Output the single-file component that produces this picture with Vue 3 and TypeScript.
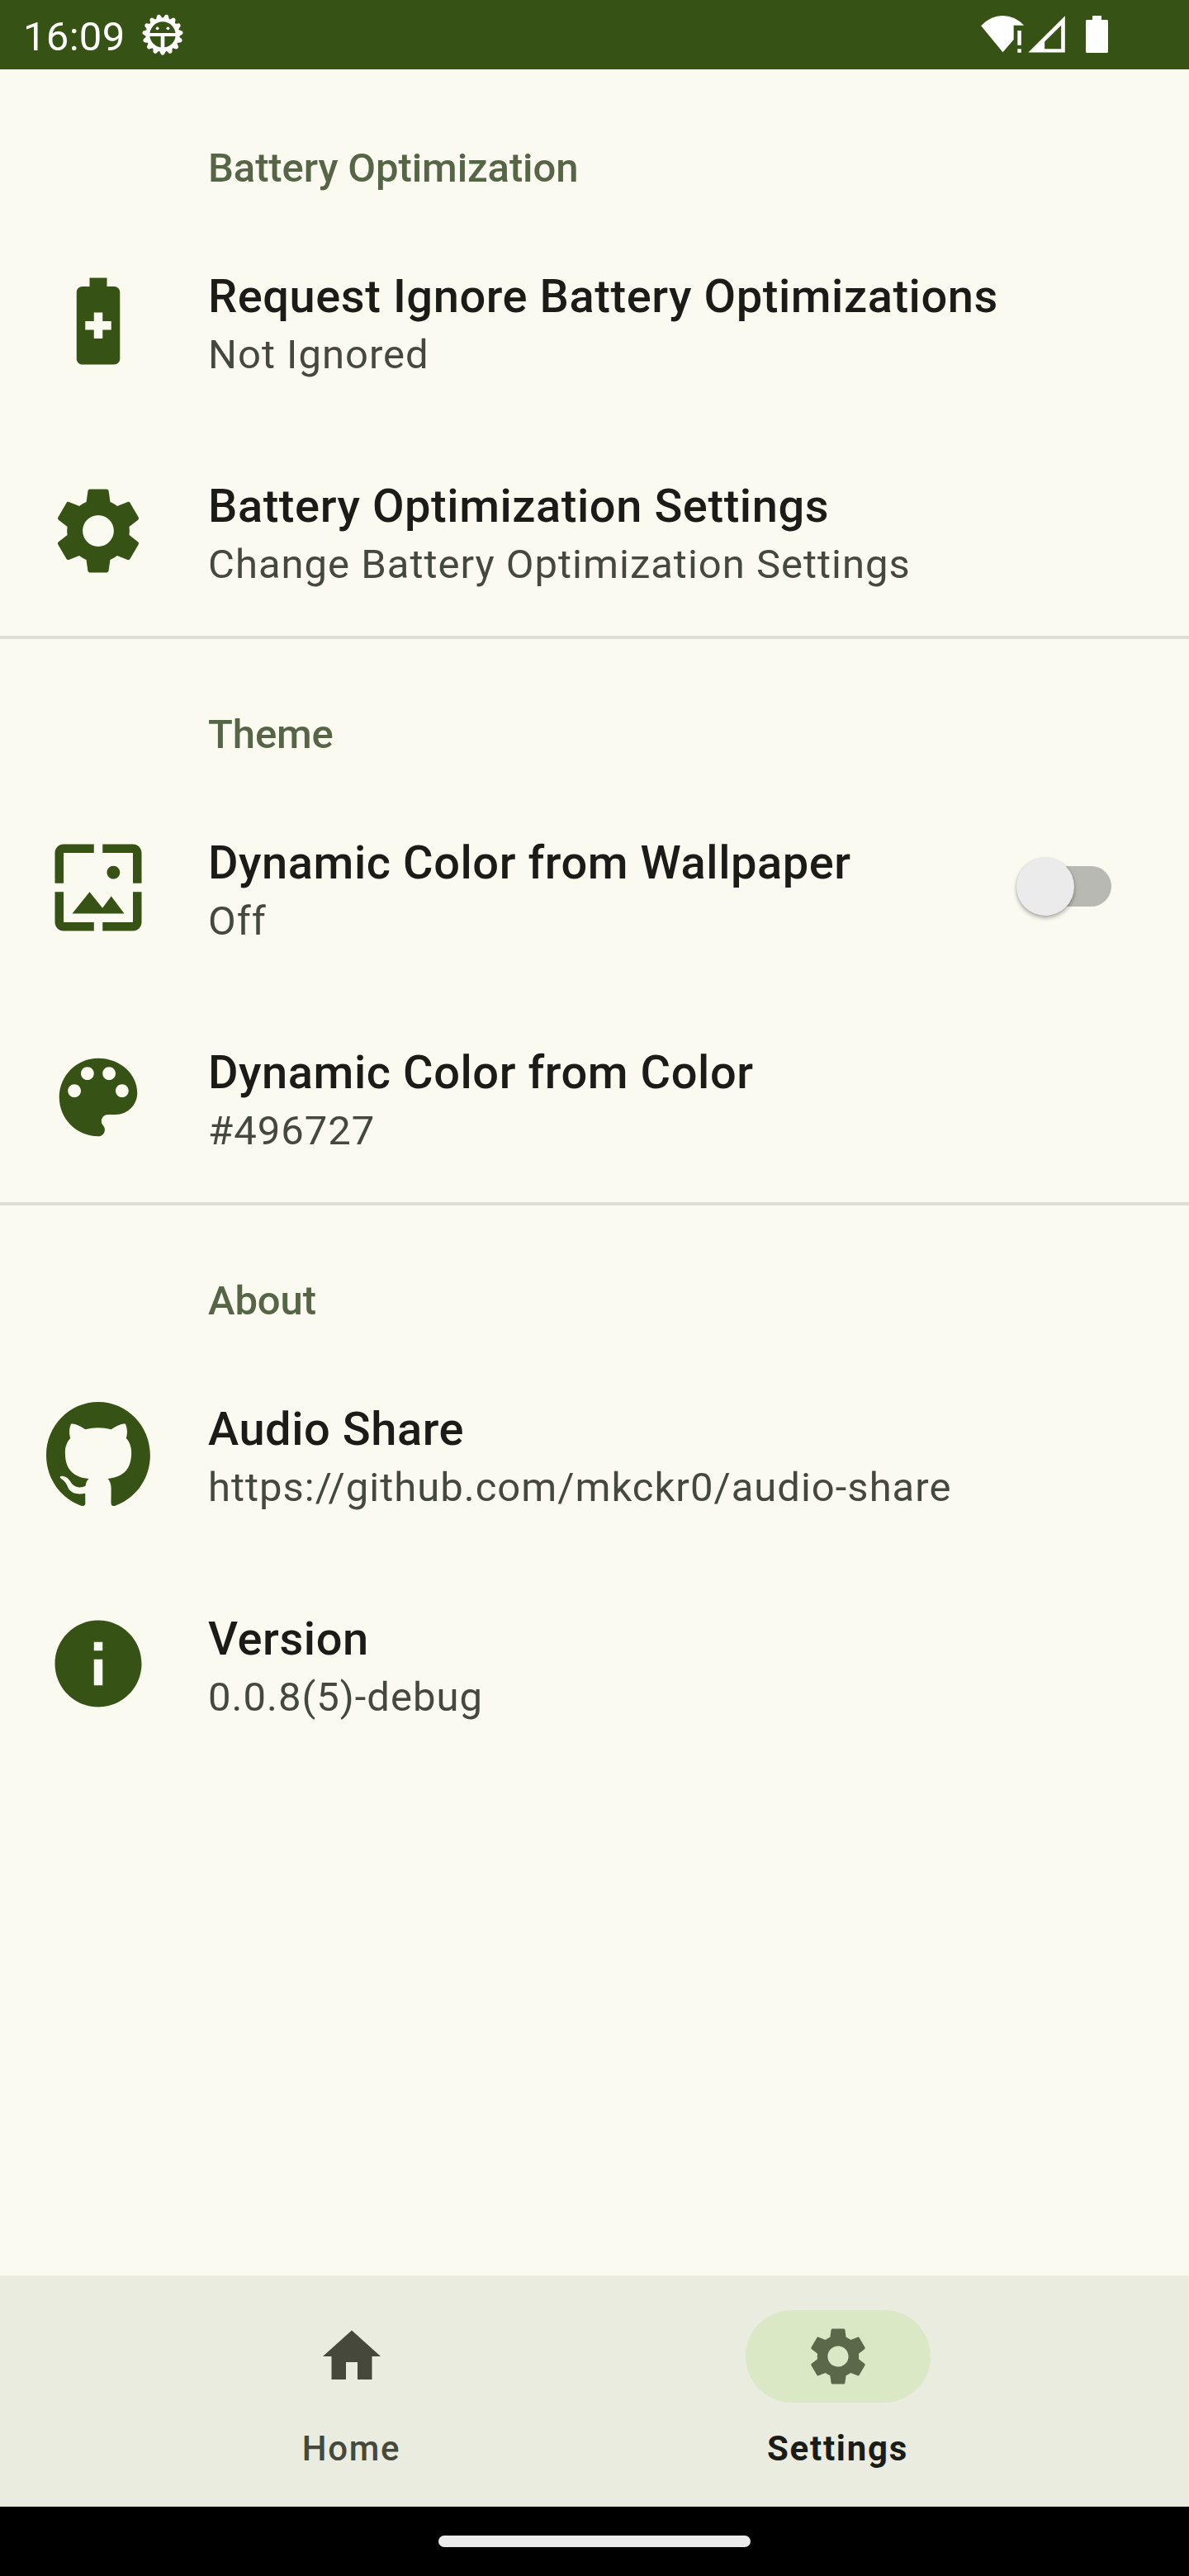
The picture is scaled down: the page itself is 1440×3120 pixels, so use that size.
<script setup lang="ts">
import { ref } from 'vue'

interface Preference {
  title: string
  summary: string
  viewBox: string
  path: string
  toggle?: boolean
}

interface Category {
  name: string
  items: Preference[]
}

const GEAR =
  'M19.14 12.94c.04-.3.06-.61.06-.94 0-.32-.02-.64-.07-.94l2.03-1.58c.18-.14.23-.41.12-.61l-1.92-3.32c-.12-.22-.37-.29-.59-.22l-2.39.96c-.5-.38-1.03-.7-1.62-.94l-.36-2.54c-.04-.24-.24-.41-.48-.41h-3.84c-.24 0-.43.17-.47.41l-.36 2.54c-.59.24-1.13.57-1.62.94l-2.39-.96c-.22-.08-.47 0-.59.22L2.74 8.87c-.12.21-.08.47.12.61l2.03 1.58c-.05.3-.09.63-.09.94s.02.64.07.94l-2.03 1.58c-.18.14-.23.41-.12.61l1.92 3.32c.12.22.37.29.59.22l2.39-.96c.5.38 1.03.7 1.62.94l.36 2.54c.05.24.24.41.48.41h3.84c.24 0 .44-.17.47-.41l.36-2.54c.59-.24 1.13-.56 1.62-.94l2.39.96c.22.08.47 0 .59-.22l1.92-3.32c.12-.22.07-.47-.12-.61l-2.01-1.58zM12 15.6c-1.98 0-3.6-1.62-3.6-3.6s1.62-3.6 3.6-3.6 3.6 1.62 3.6 3.6-1.62 3.6-3.6 3.6z'
const HOME = 'M10 20v-6h4v6h5v-8h3L12 3 2 12h3v8z'
const BATTERY_PLUS =
  'M15.67 4H14V2h-4v2H8.33C7.6 4 7 4.6 7 5.33v15.33C7 21.4 7.6 22 8.33 22h7.33c.74 0 1.34-.6 1.34-1.33V5.33C17 4.6 16.4 4 15.67 4zM15 14h-2v2h-2v-2H9v-2h2v-2h2v2h2v2z'
const WALLPAPER =
  'M4 4h7V2H4c-1.1 0-2 .9-2 2v7h2V4zm6 9l-4 5h12l-3-4-2.03 2.71L10 13zm7-4.5c0-.83-.67-1.5-1.5-1.5S14 7.67 14 8.5s.67 1.5 1.5 1.5S17 9.33 17 8.5zM20 2h-7v2h7v7h2V4c0-1.1-.9-2-2-2zm0 18h-7v2h7c1.1 0 2-.9 2-2v-7h-2v7zM4 13H2v7c0 1.1.9 2 2 2h7v-2H4v-7z'
const PALETTE =
  'M12 3c-4.97 0-9 4.03-9 9s4.03 9 9 9c.83 0 1.5-.67 1.5-1.5 0-.39-.15-.74-.39-1.01-.23-.26-.38-.61-.38-.99 0-.83.67-1.5 1.5-1.5H16c2.76 0 5-2.24 5-5 0-4.42-4.03-8-9-8zm-5.5 9c-.83 0-1.5-.67-1.5-1.5S5.67 9 6.5 9 8 9.67 8 10.5 7.33 12 6.5 12zm3-4C8.67 8 8 7.33 8 6.5S8.67 5 9.5 5s1.5.67 1.5 1.5S10.33 8 9.5 8zm5 0c-.83 0-1.5-.67-1.5-1.5S13.67 5 14.5 5s1.5.67 1.5 1.5S15.33 8 14.5 8zm3 4c-.83 0-1.5-.67-1.5-1.5S16.67 9 17.5 9s1.5.67 1.5 1.5-.67 1.5-1.5 1.5z'
const GITHUB =
  'M48.854 0C21.839 0 0 22 0 49.217c0 21.756 13.993 40.172 33.405 46.69 2.427.49 3.316-1.059 3.316-2.362 0-1.141-.08-5.052-.08-9.127-13.59 2.934-16.42-5.867-16.42-5.867-2.184-5.704-5.42-7.17-5.42-7.17-4.448-3.015.324-3.015.324-3.015 4.934.326 7.523 5.052 7.523 5.052 4.367 7.496 11.404 5.378 14.235 4.074.404-3.178 1.699-5.378 3.074-6.6-10.839-1.141-22.243-5.378-22.243-24.283 0-5.378 1.94-9.778 5.014-13.2-.485-1.222-2.184-6.275.486-13.038 0 0 4.125-1.304 13.426 5.052a46.97 46.97 0 0 1 12.214-1.63c4.125 0 8.33.571 12.213 1.63 9.302-6.356 13.427-5.052 13.427-5.052 2.67 6.763.97 11.816.485 13.038 3.155 3.422 5.015 7.822 5.015 13.2 0 18.905-11.404 23.06-22.324 24.283 1.78 1.548 3.316 4.481 3.316 9.126 0 6.6-.08 11.897-.08 13.526 0 1.304.89 2.853 3.316 2.364 19.412-6.52 33.405-24.935 33.405-46.691C97.707 22 75.788 0 48.854 0z'
const INFO = 'M12 2C6.48 2 2 6.48 2 12s4.48 10 10 10 10-4.48 10-10S17.52 2 12 2zm1 15h-2v-6h2v6zm0-8h-2V7h2v2z'

const categories: Category[] = [
  {
    name: 'Battery Optimization',
    items: [
      { title: 'Request Ignore Battery Optimizations', summary: 'Not Ignored', viewBox: '0 0 24 24', path: BATTERY_PLUS },
      { title: 'Battery Optimization Settings', summary: 'Change Battery Optimization Settings', viewBox: '0 0 24 24', path: GEAR },
    ],
  },
  {
    name: 'Theme',
    items: [
      { title: 'Dynamic Color from Wallpaper', summary: 'Off', viewBox: '0 0 24 24', path: WALLPAPER, toggle: true },
      { title: 'Dynamic Color from Color', summary: '#496727', viewBox: '0 0 24 24', path: PALETTE },
    ],
  },
  {
    name: 'About',
    items: [
      { title: 'Audio Share', summary: 'https://github.com/mkckr0/audio-share', viewBox: '0 0 97.71 96', path: GITHUB },
      { title: 'Version', summary: '0.0.8(5)-debug', viewBox: '0 0 24 24', path: INFO },
    ],
  },
]

const tabs = [
  { label: 'Home', path: HOME },
  { label: 'Settings', path: GEAR },
]
const active = ref('Settings')

// Fifteen teeth around the debug badge, one pointing straight down
const teeth = Array.from({ length: 15 }, (_, i) => i * 24)
</script>

<template>
  <div class="screen">
    <header class="status">
      <span class="clock">16:09</span>
      <svg class="badge" viewBox="-25 -25 50 50">
        <path
          v-for="a in teeth"
          :key="a"
          :transform="`rotate(${a})`"
          d="M-4.6 18L-2.4 23Q-1.8 24.7 0 24.7Q1.8 24.7 2.4 23L4.6 18z"
        />
        <path fill-rule="evenodd" d="M0-20.6a20.6 20.6 0 1 0 0 41.2a20.6 20.6 0 1 0 0-41.2zM0-15.7a15.7 15.7 0 1 1 0 31.4a15.7 15.7 0 1 1 0-31.4z" />
        <path d="M-17-1.9h34v3.8H2.3V17h-4.6V1.9H-17z" />
        <circle cx="-6.4" cy="-7.7" r="1.9" />
        <circle cx="6.4" cy="-7.7" r="1.9" />
      </svg>
      <div class="indicators">
        <svg class="wifi" viewBox="84 51 159 144">
          <path d="M84.5 94Q118 57 163 57Q207 57 240.500 92H203V144L163.500 190z" />
          <path d="M217 111h13.500v53.500H217zM217 178h13.500v13H217z" />
        </svg>
        <svg class="signal" viewBox="252 51 141 144">
          <path fill-rule="evenodd" d="M389.500 58V190.500H256zM375.500 92L315.500 151.500V178H375.500z" />
        </svg>
        <svg class="battery" viewBox="462 51 87 144">
          <path d="M489 57h33v15h21l3 3v114l-3 3h-75l-3-3V75l3-3h21z" />
        </svg>
      </div>
    </header>

    <main class="content">
      <section v-for="(cat, i) in categories" :key="cat.name">
        <h2 class="category" :class="{ divided: i > 0 }">{{ cat.name }}</h2>
        <div v-for="item in cat.items" :key="item.title" class="item">
          <svg class="icon" :viewBox="item.viewBox" preserveAspectRatio="none">
            <path :d="item.path" />
          </svg>
          <div class="text">
            <div class="title">{{ item.title }}</div>
            <div class="summary">{{ item.summary }}</div>
          </div>
          <div v-if="item.toggle" class="switch"><span class="thumb"></span></div>
        </div>
      </section>
    </main>

    <nav class="tabs">
      <div v-for="tab in tabs" :key="tab.label" class="tab" :class="{ active: tab.label === active }">
        <div class="pill">
          <svg viewBox="0 0 24 24"><path :d="tab.path" /></svg>
        </div>
        <span class="label">{{ tab.label }}</span>
      </div>
    </nav>
    <footer class="gesture"><span class="handle"></span></footer>
  </div>
</template>

<style>
body {
  margin: 0;
}
</style>

<style scoped>
.screen {
  width: 1440px;
  height: 3120px;
  display: flex;
  flex-direction: column;
  overflow: hidden;
  background: #fbfaf1;
  font-family: Roboto, sans-serif;
  white-space: nowrap;
}
svg {
  display: block;
  flex: none;
  fill: currentColor;
}
.status {
  box-sizing: border-box;
  height: 84px;
  flex: none;
  display: flex;
  align-items: center;
  padding: 0 97px 0 28px;
  background: #365215;
  color: #fff;
}
.clock {
  width: 144px;
  font-size: 49px;
  line-height: 58px;
  letter-spacing: 0.3px;
  padding-top: 6px;
}
.badge {
  width: 50px;
  height: 50px;
}
.indicators {
  display: flex;
  margin-left: auto;
  height: 50px;
}
.wifi {
  width: 53px;
  height: 48px;
}
.signal {
  width: 47px;
  height: 48px;
  margin-left: 3px;
}
.battery {
  width: 29px;
  height: 48px;
  margin-left: 23px;
}
.content {
  flex: 1;
}
.category {
  box-sizing: border-box;
  height: 178px;
  margin: 0;
  padding: 87px 0 0 252px;
  border-top: 4px solid transparent;
  font-size: 49px;
  line-height: 58px;
  font-weight: 500;
  letter-spacing: -0.1px;
  color: #556546;
}
.category.divided {
  border-top-color: #dddfd5;
}
.item {
  height: 254px;
  display: flex;
  align-items: center;
  padding: 0 94px 0 56px;
}
.icon {
  width: 126px;
  height: 126px;
  color: #365215;
}
.text {
  flex: 1;
  margin-left: 70px;
  padding-top: 6px;
}
.title {
  font-size: 56px;
  line-height: 76px;
  font-weight: 500;
  letter-spacing: 0.56px;
  color: #1b1c17;
}
.summary {
  font-size: 49px;
  line-height: 66px;
  letter-spacing: 1px;
  color: #45483d;
}
.switch {
  width: 115px;
  height: 70px;
  margin-top: -2px;
  display: flex;
  align-items: center;
}
.switch::after {
  content: '';
  width: 80px;
  height: 49px;
  flex: none;
  margin: 0 0 1px -35px;
  border-radius: 0 25px 25px 0;
  background: #b8b9b2;
}
.thumb {
  width: 70px;
  height: 70px;
  flex: none;
  border-radius: 50%;
  background: #ebebeb;
  box-shadow: 0 3px 5px rgba(0, 0, 0, 0.3), 0 0 3px rgba(0, 0, 0, 0.1);
  z-index: 1;
}
.tabs {
  height: 280px;
  flex: none;
  display: flex;
  justify-content: center;
  background: #eaecdf;
}
.tab {
  width: 589px;
  display: flex;
  flex-direction: column;
  align-items: center;
  padding-top: 42px;
  color: #45483b;
}
.pill {
  width: 224px;
  height: 112px;
  border-radius: 56px;
  display: flex;
  align-items: center;
  justify-content: center;
}
.pill svg {
  width: 84px;
  height: 84px;
}
.active .pill {
  background: #dbe8c5;
  color: #5c6949;
}
.label {
  margin-top: 31px;
  font-size: 42px;
  line-height: 50px;
  font-weight: 500;
  letter-spacing: 1.75px;
}
.active .label {
  font-weight: 700;
  color: #1b1c17;
}
.gesture {
  height: 84px;
  flex: none;
  display: flex;
  align-items: center;
  justify-content: center;
  background: #000;
}
.handle {
  width: 378px;
  height: 14px;
  border-radius: 7px;
  background: #ebebeb;
}
</style>
